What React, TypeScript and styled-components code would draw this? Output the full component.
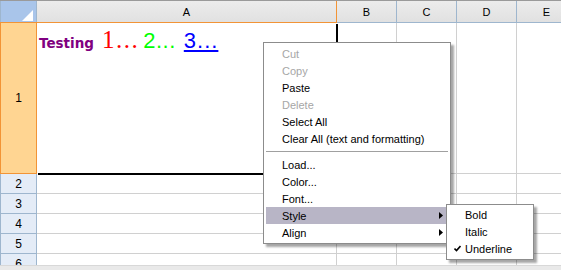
import React from "react";
import styled, { createGlobalStyle } from "styled-components";

const Global = createGlobalStyle`
  html, body { margin: 0; padding: 0; background: #fff; }
  body { font-family: "Liberation Sans", Arial, sans-serif; }
`;

const Root = styled.div`
  position: relative;
  width: 561px;
  height: 270px;
  overflow: hidden;
  display: flex;
  flex-direction: column;
  background: #fff;
`;

const Sheet = styled.div`
  flex: 1;
  overflow: hidden;
  display: grid;
  grid-template-columns: 37px 300px 60px 60px 60px 60px;
  grid-template-rows: 22px 151px repeat(5, 20px);
  border-top: 1px solid #9a9a9a;
`;

const Corner = styled.div`
  box-sizing: border-box;
  background: #a9c5ea;
  border-right: 1px solid #9eb6ce;
  border-left: 1px solid #9eb6ce;
  display: flex;
  align-items: flex-end;
  justify-content: flex-end;
  padding: 0 3px 2px 0;
`;

const ColHead = styled.div<{ $sel?: boolean }>`
  box-sizing: border-box;
  background: linear-gradient(#ececec, #e1e1e1);
  border-right: 1px solid ${(p) => (p.$sel ? "#f29436" : "#9eb6ce")};
  border-bottom: 1px solid ${(p) => (p.$sel ? "#f29436" : "#9eb6ce")};
  display: flex;
  align-items: center;
  justify-content: center;
  font-size: 11px;
  color: #000;
  padding-top: 1px;
`;

const RowHead = styled.div<{ $sel?: boolean }>`
  box-sizing: border-box;
  background: ${(p) => (p.$sel ? "#ffd592" : "#e4ecf7")};
  border-left: 1px solid ${(p) => (p.$sel ? "#f29436" : "#9eb6ce")};
  border-right: 1px solid ${(p) => (p.$sel ? "#f29436" : "#9eb6ce")};
  border-bottom: 1px solid ${(p) => (p.$sel ? "#f29436" : "#9eb6ce")};
  border-top: ${(p) => (p.$sel ? "1px solid #f29436" : "none")};
  margin-top: ${(p) => (p.$sel ? "-1px" : "0")};
  display: flex;
  align-items: center;
  justify-content: center;
  font-size: 12px;
  color: #000;
`;

const Cell = styled.div`
  box-sizing: border-box;
  border-right: 1px solid #d0d0d0;
  border-bottom: 1px solid #d0d0d0;
`;

const SelCell = styled.div`
  position: relative;
  box-sizing: border-box;
  padding: 3px 0 0 2px;
  white-space: nowrap;
  &::after {
    content: "";
    position: absolute;
    right: -1px;
    bottom: -1px;
    width: 100%;
    height: 100%;
    border-right: 2px solid #000;
    border-bottom: 2px solid #000;
    box-sizing: border-box;
    pointer-events: none;
  }
`;

const RichLine = styled.div`
  display: flex;
  align-items: baseline;
`;

const Run = styled.span<{ $c: string; $f: string; $s: number; $w?: number; $u?: boolean; $ml?: number; $ls?: number }>`
  color: ${(p) => p.$c};
  font-family: ${(p) => p.$f};
  font-size: ${(p) => p.$s}px;
  font-weight: ${(p) => p.$w ?? 400};
  text-decoration: ${(p) => (p.$u ? "underline" : "none")};
  margin-left: ${(p) => p.$ml ?? 0}px;
  letter-spacing: ${(p) => p.$ls ?? 0}px;
`;

const ScrollStrip = styled.div`
  height: 4px;
  background: #e9e9e9;
  border-top: 1px solid #d8d8d8;
  position: relative;
`;

const Menu = styled.div<{ $x: number; $y: number; $w: number; $pt?: number }>`
  position: absolute;
  left: ${(p) => p.$x}px;
  top: ${(p) => p.$y}px;
  width: ${(p) => p.$w}px;
  box-sizing: border-box;
  background: #fff;
  border: 1px solid #8c8c8c;
  padding: ${(p) => p.$pt ?? 2}px 2px 2px 2px;
  box-shadow: 3px 3px 2px rgba(0, 0, 0, 0.35);
  font-family: "Liberation Sans", Tahoma, sans-serif;
  font-size: 11px;
`;

const Item = styled.div<{ $dis?: boolean; $hl?: boolean }>`
  position: relative;
  height: 17px;
  display: flex;
  align-items: center;
  justify-content: space-between;
  padding: 0 5px 0 16px;
  color: ${(p) => (p.$dis ? "#a6a6a6" : "#000")};
  background: ${(p) => (p.$hl ? "#b8b5c6" : "transparent")};
  white-space: nowrap;
`;

const Sep = styled.div`
  height: 9px;
  display: flex;
  align-items: center;
  &::before {
    content: "";
    flex: 1;
    height: 1px;
    background: #a0a0a0;
    margin-top: -1px;
  }
`;

const Check = styled.svg`
  position: absolute;
  left: 5px;
  top: 5px;
`;

const Arrow = () => (
  <svg width="4" height="7" viewBox="0 0 4 7">
    <polygon points="0,0 4,3.5 0,7" fill="#000" />
  </svg>
);

export default function App() {
  const cols = ["B", "C", "D", "E"];
  const menu: { t: string; dis?: boolean; sep?: boolean; sub?: boolean; hl?: boolean }[] = [
    { t: "Cut", dis: true },
    { t: "Copy", dis: true },
    { t: "Paste" },
    { t: "Delete", dis: true },
    { t: "Select All" },
    { t: "Clear All (text and formatting)" },
    { t: "", sep: true },
    { t: "Load..." },
    { t: "Color..." },
    { t: "Font..." },
    { t: "Style", sub: true, hl: true },
    { t: "Align", sub: true },
  ];
  return (
    <Root>
      <Global />
      <Sheet>
        <Corner>
          <svg width="11" height="11" viewBox="0 0 11 11">
            <polygon points="11,0 11,11 0,11" fill="#fff" />
          </svg>
        </Corner>
        <ColHead $sel>A</ColHead>
        {cols.map((c) => (
          <ColHead key={c}>{c}</ColHead>
        ))}
        <RowHead $sel>1</RowHead>
        <SelCell>
          <RichLine>
            <Run $c="#800080" $f={'"DejaVu Sans", sans-serif'} $s={13.5} $w={700}>
              Testing
            </Run>
            <Run $c="#ff0000" $f={'"Liberation Serif", serif'} $s={25} $ml={8} $ls={1.5}>
              1...
            </Run>
            <Run $c="#00ff00" $f={'"Liberation Sans", sans-serif'} $s={22} $ml={4} $ls={0.5}>
              2...
            </Run>
            <Run $c="#0000ff" $f={'"Liberation Sans", sans-serif'} $s={22} $ml={8} $u $ls={1}>
              3...
            </Run>
          </RichLine>
        </SelCell>
        {cols.map((c) => (
          <Cell key={c} />
        ))}
        {[2, 3, 4, 5, 6].map((r) => (
          <React.Fragment key={r}>
            <RowHead>{r}</RowHead>
            <Cell />
            {cols.map((c) => (
              <Cell key={c} />
            ))}
          </React.Fragment>
        ))}
      </Sheet>
      <ScrollStrip />
      <Menu $x={263} $y={42} $w={188}>
        {menu.map((m, i) =>
          m.sep ? (
            <Sep key={i} />
          ) : (
            <Item key={i} $dis={m.dis} $hl={m.hl}>
              <span>{m.t}</span>
              {m.sub && <Arrow />}
            </Item>
          )
        )}
      </Menu>
      <Menu $x={446} $y={204} $w={88} $pt={1}>
        <Item>Bold</Item>
        <Item>Italic</Item>
        <Item>
          <Check width="7" height="7" viewBox="0 0 7 7">
            <polyline points="0.5,3.5 2.5,5.5 6.5,1" fill="none" stroke="#000" strokeWidth="1.6" />
          </Check>
          Underline
        </Item>
      </Menu>
    </Root>
  );
}
